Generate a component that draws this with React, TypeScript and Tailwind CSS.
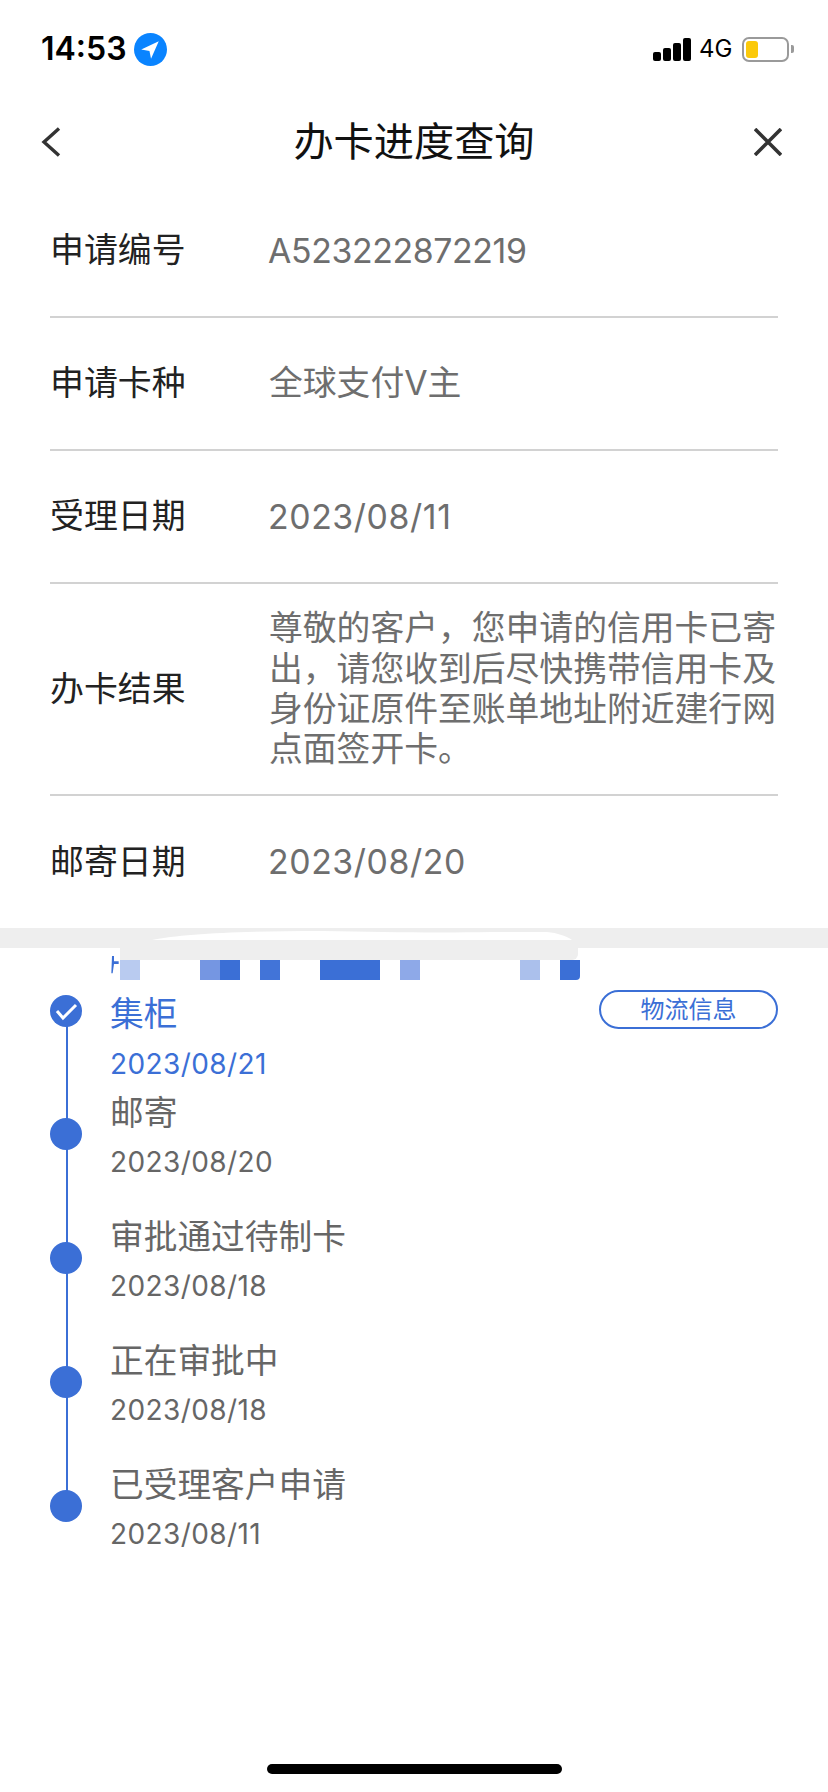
const font = "font-['Inter','Noto_Sans_CJK_SC',sans-serif]";

type InfoRow = { label: string; value: string; kind: "id" | "date" | "text" };

const infoRows: InfoRow[] = [
  { label: "申请编号", value: "A523222872219", kind: "id" },
  { label: "申请卡种", value: "全球支付V主", kind: "text" },
  { label: "受理日期", value: "2023/08/11", kind: "date" },
  {
    label: "办卡结果",
    value: "尊敬的客户，您申请的信用卡已寄出，请您收到后尽快携带信用卡及身份证原件至账单地址附近建行网点面签开卡。",
    kind: "text",
  },
  { label: "邮寄日期", value: "2023/08/20", kind: "date" },
];

const valueStyle = {
  id: "-ml-[1px] text-[33.8px] leading-[40px] tracking-[-0.35px]",
  date: "-ml-[1px] text-[33.8px] leading-[40px] tracking-[0.6px]",
  text: "text-[33.8px] leading-[40.3px]",
};

const steps = [
  { title: "邮寄", date: "2023/08/20" },
  { title: "审批通过待制卡", date: "2023/08/18" },
  { title: "正在审批中", date: "2023/08/18" },
  { title: "已受理客户申请", date: "2023/08/11" },
];

// redaction mosaic under the gray band
const mosaic = [
  "w-[20px] bg-[#b9cbf0]",
  "w-[60px]",
  "w-[20px] bg-[#7596e2]",
  "w-[20px] bg-[#3b6fd6]",
  "w-[20px]",
  "w-[20px] bg-[#4274d8]",
  "w-[40px]",
  "w-[60px] bg-[#3b6fd6]",
  "w-[20px]",
  "w-[20px] bg-[#8ea9e8]",
  "w-[100px]",
  "w-[20px] bg-[#abc0ec]",
  "w-[20px]",
  "w-[20px] rounded-br-[4px] bg-[#3b6fd6]",
];

function StatusBar() {
  return (
    <div className="flex h-[98px] items-center justify-between pl-[41px] pr-[34px]">
      <div className="flex items-center gap-[7px]">
        <span className="text-[32px] leading-none font-semibold text-black">14:53</span>
        <svg viewBox="0 0 32 32" className="h-[33px] w-[33px]">
          <circle cx="16" cy="16" r="16" fill="#0a84ff" />
          <path d="M24 8 L7 16 L15 17.5 L16.5 25 Z" fill="#fff" />
        </svg>
      </div>
      <div className="flex items-center">
        <div className="flex h-[23px] items-end gap-[2px]">
          <div className="h-[9px] w-[8px] rounded-[2px] bg-black" />
          <div className="h-[13px] w-[8px] rounded-[2px] bg-black" />
          <div className="h-[18px] w-[8px] rounded-[2px] bg-black" />
          <div className="h-[23px] w-[8px] rounded-[2px] bg-black" />
        </div>
        <span className="ml-[8px] w-[32px] text-[24px] leading-none text-black">4G</span>
        <div className="ml-[11px] h-[25px] w-[47px] rounded-[7px] border-2 border-[#9a9a9a] p-[2px]">
          <div className="h-full w-[12px] rounded-[3px] bg-[#fbc90a]" />
        </div>
        <div className="ml-[2px] h-[8px] w-[3px] rounded-r-[2px] bg-[#9a9a9a]" />
      </div>
    </div>
  );
}

function NavBar() {
  return (
    <div className="flex h-[87px] items-center justify-between pl-[41px] pr-[46px]">
      <svg viewBox="0 0 20 30" className="h-[30px] w-[20px]" fill="none" stroke="#333" strokeWidth="3.4">
        <path d="M18 1.5 L3 15 L18 28.5" />
      </svg>
      <h1 className="ml-[13px] pt-[1px] text-[40.2px] leading-none font-normal text-[#111]">办卡进度查询</h1>
      <svg viewBox="0 0 28 28" className="h-[28px] w-[28px]" fill="none" stroke="#333" strokeWidth="3.6">
        <path d="M1 1 L27 27 M27 1 L1 27" />
      </svg>
    </div>
  );
}

function RedactedBand() {
  return (
    <div className="relative">
      <div className="h-[20px] bg-[#eeeeee]" />
      <div className="relative h-[40px]">
        <svg viewBox="0 0 30 32" className="absolute left-[108px] top-0 h-[32px] w-[20px]" fill="#3b6fd6">
          <path d="M6 4 L9 4 L9 12 L16 12 L16 16 L9 16 L7 30 L5 30 Z" />
        </svg>
        <div className="absolute left-[120px] top-0 h-[12px] w-[458px] rounded-br-[6px] bg-[#eeeeee]" />
        <div className="absolute left-[120px] top-[12px] flex h-[20px]">
          {mosaic.map((cls, i) => (
            <div key={i} className={`h-full ${cls}`} />
          ))}
        </div>
      </div>
      {/* white smear left by the retouching */}
      <svg viewBox="0 0 420 10" className="absolute left-[152px] top-[2px] h-[10px] w-[420px]" fill="#fff">
        <path d="M0 10 C30 4 90 1 170 1 C230 2 280 3 340 2 L395 2 C405 3 415 6 420 10 Z" />
      </svg>
    </div>
  );
}

export default function App() {
  return (
    <div className={`${font} relative h-[1792px] w-[828px] overflow-hidden bg-white`}>
      <StatusBar />
      <NavBar />

      <div className="mx-[50px]">
        {infoRows.map((row, i) => (
          <div
            key={row.label}
            className={`flex items-center ${i === 3 ? "h-[212px]" : i === 4 ? "h-[132px]" : "h-[133px]"} ${
              i < infoRows.length - 1 ? "border-b-2 border-[#d2d2d2]" : ""
            }`}
          >
            <div className="w-[219px] shrink-0 text-[33.9px] text-[#222]">{row.label}</div>
            <div className={`${valueStyle[row.kind]} text-[#6e6e6e]`}>{row.value}</div>
          </div>
        ))}
      </div>

      <RedactedBand />

      <div className="relative px-[50px]">
        <div className="absolute left-[66px] top-[20px] h-[500px] w-[2px] bg-[#3b6fd6]" />

        <div className="relative flex">
          <div className="mt-[7px] h-[32px] w-[32px] shrink-0 rounded-full bg-[#3b6fd6]">
            <svg viewBox="0 0 32 32" className="h-[32px] w-[32px]" fill="none" stroke="#fff" strokeWidth="3">
              <path d="M7 16 L13 23 L26 10" />
            </svg>
          </div>
          <div className="ml-[28px] flex-1">
            <div className="text-[33.7px] leading-[52px] text-[#3b6fd6]">集柜</div>
            <div className="text-[28px] leading-[48px] tracking-[0.4px] text-[#3b6fd6]">2023/08/21</div>
          </div>
          <button
            type="button"
            className="mt-[2px] h-[39px] w-[179px] rounded-full border-2 border-[#3b6fd6] text-[24px] leading-none text-[#3b6fd6]"
          >
            物流信息
          </button>
        </div>

        <div className="flex flex-col gap-[25px]">
          {steps.map((s) => (
            <div key={s.title} className="relative flex items-center">
              <div className="mb-[7px] h-[32px] w-[32px] shrink-0 rounded-full bg-[#3b6fd6]" />
              <div className="ml-[28px]">
                <div className="text-[33.7px] leading-[50px] text-[#666]">{s.title}</div>
                <div className="text-[28px] leading-[49px] tracking-[0.4px] text-[#666]">{s.date}</div>
              </div>
            </div>
          ))}
        </div>
      </div>

      <div className="absolute bottom-[18px] left-[267px] h-[10px] w-[295px] rounded-full bg-black" />
    </div>
  );
}
